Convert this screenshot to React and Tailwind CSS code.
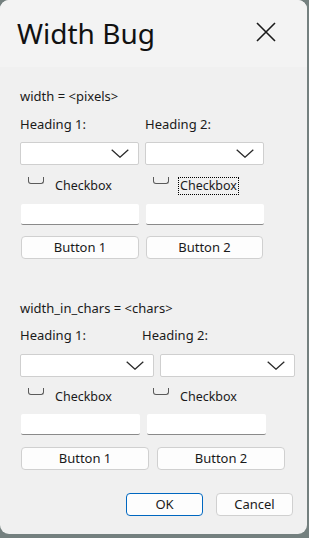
const font = { fontFamily: '"Noto Sans", "Open Sans", sans-serif' };

function Chevron() {
  return (
    <svg width="18" height="9" viewBox="0 0 18 9" fill="none">
      <polyline points="0.7,0.7 9,8.2 17.3,0.7" stroke="#2a2a2a" strokeWidth="1.3" />
    </svg>
  );
}

function Combo({ w, ml = "" }) {
  return (
    <div className={`${w} ${ml} h-[23px] bg-white border border-[#cfcfcf] rounded-[2px] flex items-center justify-end pr-[9px]`}>
      <Chevron />
    </div>
  );
}

function Check({ focus }) {
  return (
    <div className="flex items-start h-[17px]">
      <div className="w-[16px] h-[7px] ml-[8px] border-l border-r border-b border-[#5a5a5a] rounded-b-[3px]" />
      <span
        className={`ml-[10px] leading-[16px] mt-[1px] px-[1px] text-[12.5px] ${focus ? "outline-1 outline-dotted outline-black" : ""}`}
      >
        Checkbox
      </span>
    </div>
  );
}

function Edit({ w, ml = "" }) {
  return (
    <div className={`${w} ${ml} h-[21px] bg-white border-b border-[#8a8a8a] rounded-[2px]`} />
  );
}

function Btn({ w, ml = "", children }) {
  return (
    <div className={`${w} ${ml} h-[23px] bg-[#fdfdfd] border border-[#d0d0d0] rounded-[4px] flex items-center justify-center leading-none`}>
      {children}
    </div>
  );
}

export default function App() {
  return (
    <div className="w-[309px] h-[538px] bg-[#74807f]">
      <div
        className="w-[307px] h-[534px] bg-[#f0f0f0] rounded-[9px] overflow-hidden text-[13px] text-[#1a1a1a] flex flex-col"
        style={font}
      >
        <div className="h-[67px] bg-[#f3f3f3] flex items-center justify-between pl-[17px] pr-[31px]">
          <span className="text-[28px] leading-none mb-[1px] text-[#111]">Width Bug</span>
          <svg width="20" height="20" viewBox="0 0 20 20" className="mb-[3px]">
            <path d="M1 1 L19 19 M19 1 L1 19" stroke="#1a1a1a" strokeWidth="1.6" />
          </svg>
        </div>

        <div className="pl-[20px] pt-[21px]">
          <div className="leading-[16px]">width = &lt;pixels&gt;</div>
          <div className="flex leading-[16px] mt-[12px]">
            <span className="w-[125px]">Heading 1:</span>
            <span>Heading 2:</span>
          </div>
          <div className="flex mt-[10px]">
            <Combo w="w-[119px]" />
            <Combo w="w-[119px]" ml="ml-[6px]" />
          </div>
          <div className="flex mt-[12px]">
            <div className="w-[125px]">
              <Check />
            </div>
            <Check focus />
          </div>
          <div className="flex mt-[10px]">
            <Edit w="w-[118px]" ml="ml-[1px]" />
            <Edit w="w-[118px]" ml="ml-[7px]" />
          </div>
          <div className="flex mt-[11px]">
            <Btn w="w-[118px]" ml="ml-[1px]">Button 1</Btn>
            <Btn w="w-[117px]" ml="ml-[7px]">Button 2</Btn>
          </div>

          <div className="leading-[16px] mt-[41px]">width_in_chars = &lt;chars&gt;</div>
          <div className="flex leading-[16px] mt-[11px]">
            <span className="w-[122px]">Heading 1:</span>
            <span>Heading 2:</span>
          </div>
          <div className="flex mt-[11px]">
            <Combo w="w-[134px]" />
            <Combo w="w-[135px]" ml="ml-[6px]" />
          </div>
          <div className="flex mt-[11px]">
            <div className="w-[125px]">
              <Check />
            </div>
            <Check />
          </div>
          <div className="flex mt-[9px]">
            <Edit w="w-[119px]" ml="ml-[1px]" />
            <Edit w="w-[119px]" ml="ml-[7px]" />
          </div>
          <div className="flex mt-[12px]">
            <Btn w="w-[128px]" ml="ml-[1px]">Button 1</Btn>
            <Btn w="w-[128px]" ml="ml-[8px]">Button 2</Btn>
          </div>

          <div className="flex justify-end pr-[14px] mt-[23px]">
            <div className="w-[77px] h-[23px] bg-[#fdfdfd] border border-[#0067c0] rounded-[4px] flex items-center justify-center leading-none">
              OK
            </div>
            <div className="w-[77px] h-[23px] ml-[13px] bg-[#fdfdfd] border border-[#d0d0d0] rounded-[4px] flex items-center justify-center leading-none">
              Cancel
            </div>
          </div>
        </div>
      </div>
    </div>
  );
}
